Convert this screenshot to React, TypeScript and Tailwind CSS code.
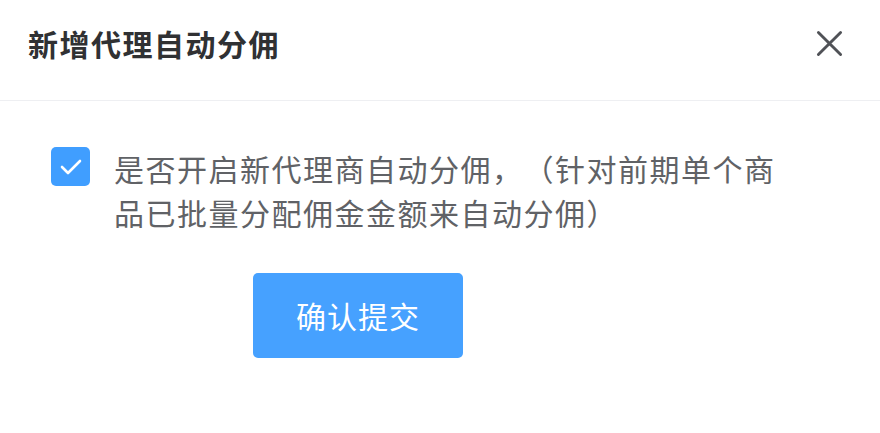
import React from "react";

const cjk = { fontFamily: '"Noto Sans CJK SC", "Noto Sans", sans-serif' };

export default function App() {
    return (
        <div className="w-[880px] h-[433px] bg-white overflow-hidden [text-spacing-trim:space-all]" style={cjk}>
            <div className="h-[101px] flex items-center justify-between pl-[28px] pr-[36px] border-b border-[#eeeff2] pb-[14px]">
                <h1 className="text-[30px] font-bold text-[#303133] leading-none tracking-[1.5px]">新增代理自动分佣</h1>
                <button className="w-[30px] h-[30px] flex items-center justify-center text-[#505257]">
                    <svg width="27" height="27" viewBox="0 0 28 28" fill="none" stroke="currentColor" strokeWidth="3" strokeLinecap="round">
                        <path d="M2.5 2.5L25.5 25.5M25.5 2.5L2.5 25.5" />
                    </svg>
                </button>
            </div>

            <div className="flex items-start gap-[24px] pl-[51px] pr-[80px] pt-[45px]">
                <span className="shrink-0 mt-[1px] w-[39px] h-[39px] rounded-[5px] bg-[#409eff] flex items-center justify-center">
                    <svg width="22" height="16" viewBox="0 0 22 16" fill="none" stroke="white" strokeWidth="2.6" strokeLinecap="round" strokeLinejoin="round">
                        <path d="M2 8L8 14L20 2" />
                    </svg>
                </span>
                <p className="text-[30px] leading-[44px] text-[#606266] tracking-[1.5px] w-[680px]">
                    是否开启新代理商自动分佣，（针对前期单个商品已批量分配佣金金额来自动分佣）
                </p>
            </div>

            <div className="pl-[253px] pt-[39px]">
                <button className="w-[210px] h-[85px] rounded-[5px] bg-[#46a1ff] text-white text-[30px] tracking-[1px]">
                    确认提交
                </button>
            </div>
        </div>
    );
}
